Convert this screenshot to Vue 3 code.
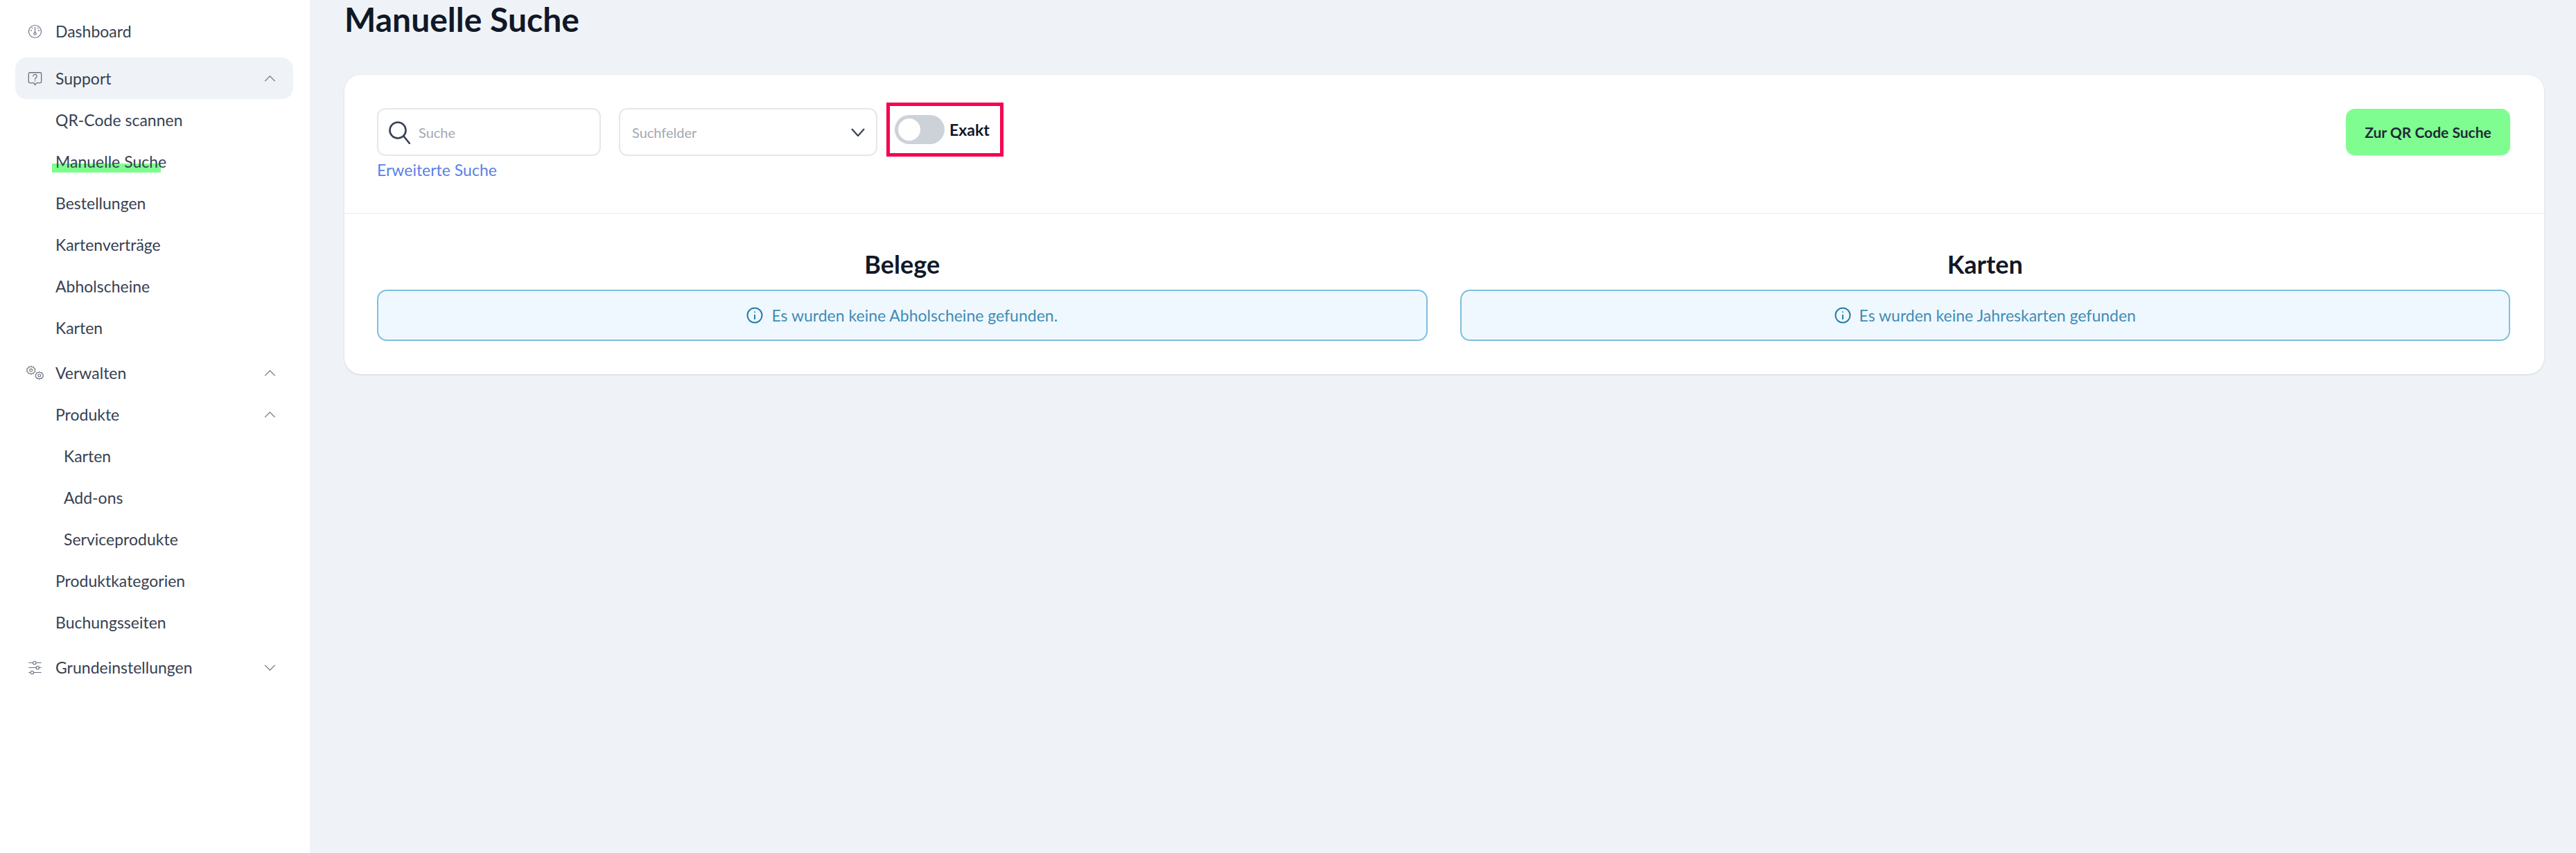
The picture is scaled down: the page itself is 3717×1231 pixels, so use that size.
<template>
  <div class="page">
    <aside class="sidebar">
      <nav class="menu">
        <div class="item top dash">
          <svg class="ico" viewBox="0 0 24 24" fill="none" stroke="currentColor" stroke-width="1.3">
            <circle cx="12" cy="12" r="10.3" />
            <path d="M12 5v8M5 10.5h1.5M17.5 10.5H19M6.8 5.8l1 1M17.2 5.8l-1 1" stroke-linecap="round" />
            <circle cx="12" cy="15.5" r="2" />
          </svg>
          <span>Dashboard</span>
        </div>

        <div class="item top active">
          <svg class="ico" viewBox="0 0 24 24" fill="none" stroke="currentColor" stroke-width="1.5">
            <path d="M3.5 2h17A2 2 0 0 1 22.5 4v13a2 2 0 0 1-2 2H15l-3 3.5L10 19H3.5a2 2 0 0 1-2-2V4a2 2 0 0 1 2-2z" stroke-linejoin="round" />
            <path d="M9 8a3 3 0 1 1 4.6 2.5c-1 .6-1.6 1.2-1.6 2.5M12 15.3v.7" stroke-linecap="round" />
          </svg>
          <span>Support</span>
          <svg class="chev" viewBox="0 0 18 10" fill="none" stroke="currentColor" stroke-width="1.4"><path d="M1 9l8-8 8 8" /></svg>
        </div>
        <div class="item sub">QR-Code scannen</div>
        <div class="item sub marked">Manuelle Suche<i class="marker"></i></div>
        <div class="item sub">Bestellungen</div>
        <div class="item sub">Kartenverträge</div>
        <div class="item sub">Abholscheine</div>
        <div class="item sub">Karten</div>

        <div class="item top group">
          <svg class="ico wide" viewBox="0 0 28 24" fill="none" stroke="currentColor" stroke-width="1.2">
            <path d="M8 1.5l1.6 1.4 2.1-.3.7 2 1.9 1-.6 2 .6 2-1.9 1-.7 2-2.1-.3L8 13.700l-1.600-1.400-2.100.300-.700-2-1.900-1 .600-2-.600-2 1.900-1 .700-2 2.100.300z" stroke-linejoin="round" />
            <circle cx="8" cy="7.600" r="2" />
            <path d="M20.500 10l1.500 1.200 2-.200.600 1.800 1.700 1-.500 1.800.500 1.800-1.700 1-.600 1.800-2-.200-1.500 1.200-1.500-1.200-2 .200-.600-1.800-1.700-1 .500-1.800-.500-1.800 1.700-1 .600-1.800 2 .200z" stroke-linejoin="round" />
            <circle cx="20.500" cy="15.600" r="2" />
          </svg>
          <span>Verwalten</span>
          <svg class="chev" viewBox="0 0 18 10" fill="none" stroke="currentColor" stroke-width="1.4"><path d="M1 9l8-8 8 8" /></svg>
        </div>
        <div class="item sub">
          <span>Produkte</span>
          <svg class="chev" viewBox="0 0 18 10" fill="none" stroke="currentColor" stroke-width="1.4"><path d="M1 9l8-8 8 8" /></svg>
        </div>
        <div class="item subsub">Karten</div>
        <div class="item subsub">Add-ons</div>
        <div class="item subsub">Serviceprodukte</div>
        <div class="item sub">Produktkategorien</div>
        <div class="item sub">Buchungsseiten</div>

        <div class="item top group">
          <svg class="ico" viewBox="0 0 24 24" fill="none" stroke="currentColor" stroke-width="1.3">
            <path d="M1.500 4h7M14 4h8.500M1.500 12h12M19 12h3.500M1.500 20h3M10 20h12.500" />
            <circle cx="11.200" cy="4" r="2.600" />
            <circle cx="16.300" cy="12" r="2.600" />
            <circle cx="7.200" cy="20" r="2.600" />
          </svg>
          <span>Grundeinstellungen</span>
          <svg class="chev" viewBox="0 0 18 10" fill="none" stroke="currentColor" stroke-width="1.4"><path d="M1 1l8 8 8-8" /></svg>
        </div>
      </nav>
    </aside>

    <main class="main">
      <h1 class="title">Manuelle Suche</h1>

      <section class="card">
        <div class="filters">
          <div class="filter-left">
            <div class="controls">
              <label class="search">
                <svg class="search-ico" viewBox="0 0 32 34" fill="none" stroke="#374151" stroke-width="2.600">
                  <circle cx="14" cy="14" r="11.500" />
                  <path d="M22.500 22.500L31 33" stroke-linecap="round" />
                </svg>
                <span class="placeholder">Suche</span>
              </label>
              <div class="select">
                <span class="placeholder">Suchfelder</span>
                <svg class="select-chev" viewBox="0 0 20 12" fill="none" stroke="#374151" stroke-width="2.200"><path d="M1 1l9 10 9-10" /></svg>
              </div>
              <div class="exact">
                <span class="toggle"><i class="knob"></i></span>
                <span class="exact-label">Exakt</span>
              </div>
            </div>
            <a class="link">Erweiterte Suche</a>
          </div>
          <button class="qr-btn">Zur QR Code Suche</button>
        </div>

        <div class="results">
          <div v-for="col in columns" :key="col.title" class="col">
            <h2 class="col-title">{{ col.title }}</h2>
            <div class="alert">
              <svg class="alert-ico" viewBox="0 0 24 24" fill="none" stroke="currentColor" stroke-width="2">
                <circle cx="12" cy="12" r="10.500" />
                <path d="M12 11v7M12 6.500v1.500" />
              </svg>
              <span>{{ col.message }}</span>
            </div>
          </div>
        </div>
      </section>
    </main>
  </div>
</template>

<script setup>
const columns = [
  { title: 'Belege', message: 'Es wurden keine Abholscheine gefunden.' },
  { title: 'Karten', message: 'Es wurden keine Jahreskarten gefunden' }
]
</script>

<style>
html, body { margin: 0; background: #eff3f7; }
</style>

<style scoped>
.page {
  display: flex;
  min-height: 1231px;
  background: #eff3f7;
  font-family: "Lato", "Open Sans", sans-serif;
  color: #111827;
}

.sidebar {
  width: 447px;
  flex-shrink: 0;
  background: #fff;
  box-sizing: border-box;
  padding: 15px 24px 0 22px;
}

.item {
  display: flex;
  align-items: center;
  height: 60px;
  font-size: 23px;
  color: #374151;
  position: relative;
}
.top { padding-left: 18px; }
.top span { margin-left: 19px; }
.active { background: #eff3f7; border-radius: 16px; margin-top: 8px; }
.group { margin-top: 5px; }
.sub { padding-left: 58px; }
.subsub { padding-left: 70px; }

.ico { width: 21px; height: 21px; color: #6b7280; flex-shrink: 0; }
.ico.wide { width: 27px; height: 23px; margin-left: -3px; margin-right: -3px; }
.chev { width: 17px; height: 9px; margin-left: auto; margin-right: 25px; color: #6b7280; }

.marked { z-index: 0; }
.marker {
  position: absolute;
  left: 53px;
  top: 33px;
  width: 157px;
  height: 13px;
  background: #7dfd8e;
  z-index: -1;
}

.main {
  flex: 1;
  min-width: 0;
  padding: 0 46px 0 50px;
}

.title {
  margin: 0;
  height: 108px;
  box-sizing: border-box;
  padding-top: 2px;
  font-size: 48px;
  line-height: 52px;
  font-weight: 700;
  color: #111827;
}

.card {
  background: #fff;
  border-radius: 24px;
  box-shadow: 0 1px 3px rgba(0, 0, 0, 0.12);
}

.filters {
  display: flex;
  justify-content: space-between;
  align-items: flex-start;
  height: 201px;
  box-sizing: border-box;
  padding: 48px 49px 0 47px;
  border-bottom: 2px solid #f3f4f6;
}

.controls {
  display: flex;
  align-items: flex-start;
}

.search, .select {
  display: flex;
  align-items: center;
  height: 69px;
  box-sizing: border-box;
  border: 2px solid #e5e7eb;
  border-radius: 12px;
  background: #fff;
}
.search { width: 323px; padding-left: 14px; }
.select { width: 373px; margin-left: 26px; padding: 0 16px 0 17px; justify-content: space-between; }

.search-ico { width: 32px; height: 34px; margin-right: 12px; }
.select-chev { width: 20px; height: 12px; }
.placeholder { font-size: 20px; color: #a3a8b1; }

.exact {
  display: flex;
  align-items: center;
  box-sizing: border-box;
  width: 169px;
  height: 78px;
  margin: -8px 0 0 13px;
  padding-left: 7px;
  border: 5px solid #f5044f;
}
.toggle {
  position: relative;
  width: 72px;
  height: 42px;
  border-radius: 21px;
  background: #cdd2d9;
}
.knob {
  position: absolute;
  left: 5px;
  top: 5px;
  width: 32px;
  height: 32px;
  border-radius: 50%;
  background: #fff;
}
.exact-label {
  margin-left: 7px;
  font-size: 23px;
  font-weight: 700;
  color: #111827;
}

.link {
  display: block;
  margin-top: 4px;
  font-size: 23px;
  line-height: 30px;
  color: #5b7fe8;
}

.qr-btn {
  width: 237px;
  height: 67px;
  margin-top: 1px;
  border: 0;
  border-radius: 13px;
  background: #7ffd91;
  box-shadow: 0 1px 2px rgba(0, 0, 0, 0.08);
  font-family: inherit;
  font-size: 21px;
  font-weight: 700;
  color: #1f2937;
}

.results {
  display: grid;
  grid-template-columns: 1fr 1fr;
  column-gap: 47px;
  padding: 0 49px 48px 47px;
}

.col-title {
  margin: 0;
  padding-top: 49px;
  height: 60px;
  font-size: 36px;
  line-height: 46px;
  font-weight: 700;
  text-align: center;
  color: #111827;
}

.alert {
  display: flex;
  align-items: center;
  justify-content: center;
  height: 74px;
  box-sizing: border-box;
  border: 2px solid #7fbfdc;
  border-radius: 14px;
  background: #eff8ff;
  font-size: 23px;
  color: #3f8cb5;
}
.alert-ico { width: 24px; height: 24px; margin-right: 12px; color: #2b7eaa; }
</style>
